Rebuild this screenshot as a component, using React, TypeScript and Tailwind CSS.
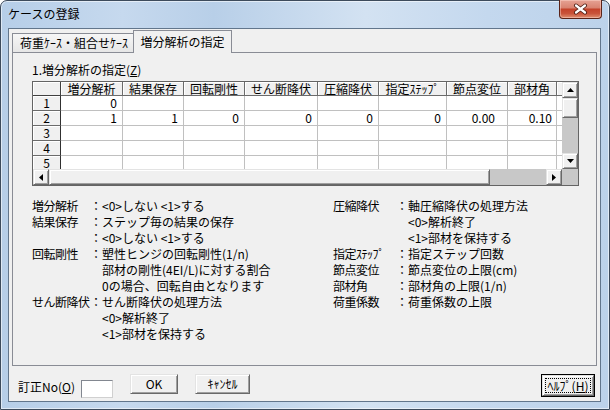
import React from 'react';

type Col = { name: string; w: string; pad: string };
const cols: Col[] = [
  { name: '増分解析', w: 'w-[62px]', pad: 'pr-[5px]' },
  { name: '結果保存', w: 'w-[61px]', pad: 'pr-[5px]' },
  { name: '回転剛性', w: 'w-[61px]', pad: 'pr-[5px]' },
  { name: 'せん断降伏', w: 'w-[73px]', pad: 'pr-[5px]' },
  { name: '圧縮降伏', w: 'w-[61px]', pad: 'pr-[5px]' },
  { name: '指定ｽﾃｯﾌﾟ', w: 'w-[68px]', pad: 'pr-[5px]' },
  { name: '節点変位', w: 'w-[61px]', pad: 'pr-[12px]' },
  { name: '部材角', w: 'w-[49px]', pad: 'pr-[4px]' },
];

const rows: string[][] = [
  ['0', '', '', '', '', '', '', ''],
  ['1', '1', '0', '0', '0', '0', '0.00', '0.10'],
  ['', '', '', '', '', '', '', ''],
  ['', '', '', '', '', '', '', ''],
  ['', '', '', '', '', '', '', ''],
];

const bevel =
  'border border-t-[#e3e3e3] border-l-[#e3e3e3] border-r-[#696969] border-b-[#696969] bg-[#f0f0f0] shadow-[inset_1px_1px_0_#ffffff,inset_-1px_-1px_0_#a0a0a0]';

function Arrow({ dir }: { dir: 'up' | 'down' | 'left' | 'right' }) {
  const pts =
    dir === 'up'
      ? '3.5,0 7,4 0,4'
      : dir === 'down'
      ? '0,0 7,0 3.5,4'
      : dir === 'left'
      ? '4,0 4,7 0,3.5'
      : '0,0 0,7 4,3.5';
  const vertical = dir === 'up' || dir === 'down';
  return (
    <svg width={vertical ? 7 : 4} height={vertical ? 4 : 7} viewBox={vertical ? '0 0 7 4' : '0 0 4 7'}>
      <polygon points={pts} fill="#000" />
    </svg>
  );
}

function SBtn({ dir, className }: { dir: 'up' | 'down' | 'left' | 'right'; className: string }) {
  return (
    <div className={`flex shrink-0 items-center justify-center ${bevel} ${className}`}>
      <Arrow dir={dir} />
    </div>
  );
}

function CloseButton() {
  return (
    <div className="-mr-px -mt-px flex h-[19px] w-[43px] items-center justify-center rounded-b-[4px] border border-t-0 border-[#5a2318] bg-[linear-gradient(180deg,#e6a294_0%,#d98472_42%,#c4432b_52%,#c9533a_75%,#df8f70_100%)] shadow-[inset_0_0_0_1px_rgba(255,220,210,0.45)]">
      <svg width="15" height="12" viewBox="0 0 15 12">
        <path d="M3 2.5 L12 9.5 M12 2.5 L3 9.5" stroke="#4a1a10" strokeWidth="4" strokeLinecap="round" />
        <path d="M3 2.5 L12 9.5 M12 2.5 L3 9.5" stroke="#ffffff" strokeWidth="2.3" strokeLinecap="round" />
      </svg>
    </div>
  );
}

function Grid() {
  return (
    <div className="mt-[3px] flex h-[105px] w-[547px] flex-col border border-[#646464] bg-white">
      <div className="flex h-[87px]">
        <div className="flex flex-1 flex-col overflow-hidden">
          <div className="flex h-[14px] shrink-0">
            <div className="h-full w-[28px] shrink-0 border-r border-b border-[#404040] bg-[#f0f0f0] shadow-[inset_1px_1px_0_#ffffff]" />
            {cols.map((c) => (
              <div
                key={c.name}
                className={`flex h-full shrink-0 items-center justify-center whitespace-nowrap border-r border-b border-[#6b6b6b] bg-[#f0f0f0] leading-[12px] shadow-[inset_1px_1px_0_#ffffff] ${c.w}`}
              >
                {c.name}
              </div>
            ))}
            <div className="h-full flex-1 border-b border-[#6b6b6b] bg-[#f0f0f0] shadow-[inset_1px_1px_0_#ffffff]" />
          </div>
          {rows.map((r, i) => (
            <div key={i} className="flex h-[15px] shrink-0">
              <div className="flex h-full w-[28px] shrink-0 items-center justify-center border-r border-r-[#303030] border-b border-b-[#6b6b6b] bg-[#f0f0f0] leading-[12px] shadow-[inset_1px_1px_0_#ffffff]">
                {i + 1}
              </div>
              {cols.map((c, j) => (
                <div
                  key={c.name}
                  className={`flex h-full shrink-0 items-center justify-end border-r border-b border-[#c0c0c0] bg-white leading-[12px] ${c.w} ${c.pad}`}
                >
                  {r[j]}
                </div>
              ))}
              <div className="h-full flex-1 border-b border-[#c0c0c0] bg-white" />
            </div>
          ))}
        </div>
        <div className="flex w-[16px] shrink-0 flex-col">
          <SBtn dir="up" className="h-[16px] w-[16px]" />
          <div className={`h-[20px] w-[16px] shrink-0 ${bevel}`} />
          <div className="flex-1 bg-[#c8c8c8]" />
          <SBtn dir="down" className="h-[16px] w-[16px]" />
        </div>
      </div>
      <div className="flex h-[16px] shrink-0">
        <SBtn dir="left" className="h-[16px] w-[16px]" />
        <div className={`h-[16px] w-[441px] shrink-0 ${bevel}`} />
        <div className="flex-1 bg-[#c8c8c8]" />
        <SBtn dir="right" className="h-[16px] w-[16px]" />
        <div className="h-[16px] w-[16px] shrink-0 bg-[#c8c8c8]" />
      </div>
    </div>
  );
}

function Line({ label, colon, text, lw }: { label: string; colon: boolean; text: string; lw: string }) {
  return (
    <div className="flex h-[16px] whitespace-nowrap leading-[16px]">
      <span className={`shrink-0 tracking-[-0.5px] ${lw}`}>{label}</span>
      <span className="w-[12px] shrink-0">{colon ? '：' : ''}</span>
      <span>{text}</span>
    </div>
  );
}

const leftLines: [string, boolean, string][] = [
  ['増分解析', true, '<0>しない <1>する'],
  ['結果保存', true, 'ステップ毎の結果の保存'],
  ['', true, '<0>しない <1>する'],
  ['回転剛性', true, '塑性ヒンジの回転剛性(1/n)'],
  ['', false, '部材の剛性(4EI/L)に対する割合'],
  ['', false, '0の場合、回転自由となります'],
  ['せん断降伏', true, 'せん断降伏の処理方法'],
  ['', false, '<0>解析終了'],
  ['', false, '<1>部材を保持する'],
];

const rightLines: [string, boolean, string][] = [
  ['圧縮降伏', true, '軸圧縮降伏の処理方法'],
  ['', false, '<0>解析終了'],
  ['', false, '<1>部材を保持する'],
  ['指定ｽﾃｯﾌﾟ', true, '指定ステップ回数'],
  ['節点変位', true, '節点変位の上限(cm)'],
  ['部材角', true, '部材角の上限(1/n)'],
  ['荷重係数', true, '荷重係数の上限'],
];

export default function App() {
  return (
    <div className="h-[410px] w-[610px] bg-white">
      <div className="flex h-[410px] w-[610px] flex-col rounded-t-[7px] border border-[#3d4b5c] bg-[linear-gradient(90deg,#b6cee8_0%,#c6d9ee_20%,#b8cfe8_35%,#d3e2f2_60%,#c4d8ee_80%,#bcd2ea_100%)] pb-[7px] pl-[7px] pr-[8px] font-['Noto_Sans_CJK_JP',sans-serif] text-[12px] text-black shadow-[inset_0_0_0_1px_rgba(255,255,255,0.55)]">
        <div className="flex h-[27px] shrink-0 items-start justify-between">
          <div className="pt-[4px] text-[12px] leading-[18px]">ケースの登録</div>
          <CloseButton />
        </div>
        <div className="flex flex-1 flex-col border border-[#62768c] bg-[#f0f0f0]">
          <div className="relative z-10 -mb-px ml-[3px] mt-[1px] flex h-[23px] shrink-0 items-end">
            <div className="mb-[1px] flex h-[19px] w-[121px] items-center border-t border-l border-[#898c95] bg-[linear-gradient(180deg,#f6f6f6,#e6e6e6)] pl-[7px] leading-[16px]">
              荷重ｹｰｽ・組合せｹｰｽ
            </div>
            <div className="flex h-[23px] w-[99px] items-center justify-center border-t border-l border-r border-[#898c95] bg-[#f0f0f0] pb-[1px] leading-[16px]">
              増分解析の指定
            </div>
          </div>
          <div className="mx-[3px] flex flex-1 flex-col border border-[#898c95] bg-[#f0f0f0] pl-[19px] pt-[9px]">
            <div className="h-[16px] leading-[16px]">
              1.増分解析の指定(<span className="underline">Z</span>)
            </div>
            <Grid />
            <div className="mt-[12px] flex">
              <div className="flex w-[301px] shrink-0 flex-col">
                {leftLines.map(([l, c, t], i) => (
                  <Line key={i} label={l} colon={c} text={t} lw="w-[58px]" />
                ))}
              </div>
              <div className="flex flex-col">
                {rightLines.map(([l, c, t], i) => (
                  <Line key={i} label={l} colon={c} text={t} lw="w-[63px]" />
                ))}
              </div>
            </div>
          </div>
          <div className="flex h-[35px] shrink-0 items-start pl-[9px] pr-[5px] pt-[8px]">
            <div className="mt-[2px] h-[21px] w-[63px] shrink-0 whitespace-nowrap leading-[21px]">
              訂正No(<span className="underline">O</span>)
            </div>
            <div className="mt-[6px] h-[18px] w-[32px] shrink-0 border border-t-[#828790] border-l-[#828790] border-r-[#d0d0d0] border-b-[#d0d0d0] bg-white" />
            <div className={`ml-[17px] flex h-[20px] w-[48px] shrink-0 items-center justify-center leading-[16px] ${bevel}`}>
              OK
            </div>
            <div className={`ml-[17px] flex h-[20px] w-[55px] shrink-0 items-center justify-center leading-[16px] ${bevel}`}>
              ｷｬﾝｾﾙ
            </div>
            <div className="ml-auto flex h-[23px] w-[54px] shrink-0 border border-black">
              <div className={`flex flex-1 p-[2px] ${bevel}`}>
                <div className="flex flex-1 items-center justify-center border border-dotted border-black leading-[15px]">
                  ﾍﾙﾌﾟ(<span className="underline">H</span>)
                </div>
              </div>
            </div>
          </div>
        </div>
      </div>
    </div>
  );
}
